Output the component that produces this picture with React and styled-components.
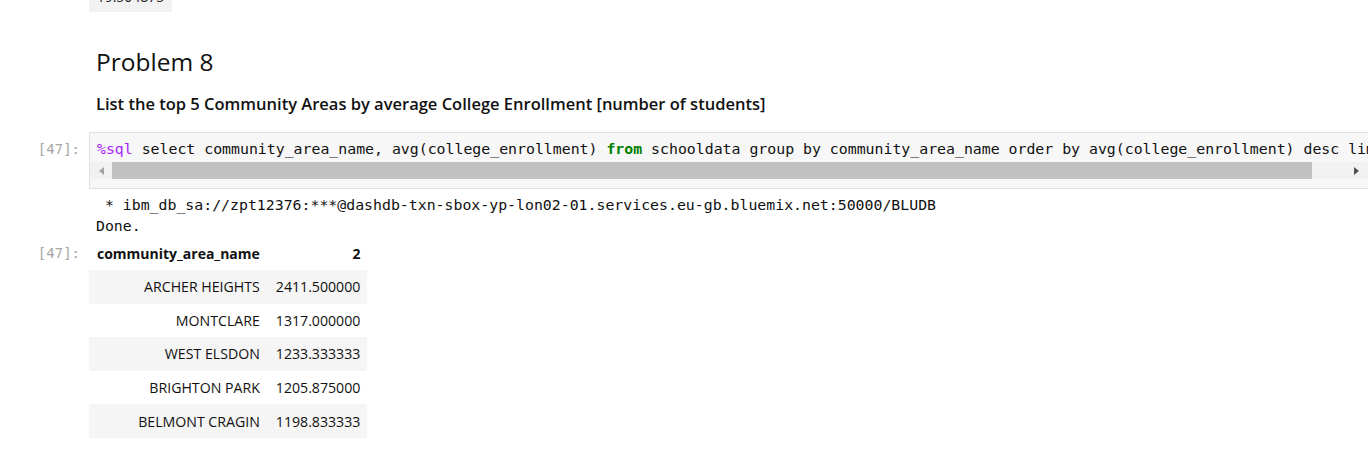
import React from "react";
import styled, { createGlobalStyle } from "styled-components";

const GlobalStyle = createGlobalStyle`
  html, body {
    margin: 0;
    padding: 0;
    background: #ffffff;
    overflow: hidden;
  }
  body {
    font-family: "Open Sans", "Noto Sans", sans-serif;
    color: #000;
  }
`;

const Notebook = styled.div`
  width: 1368px;
  height: 465px;
  overflow: hidden;
`;

const StubCell = styled.div`
  margin-left: 89px;
  width: 83px;
  height: 12px;
  background: #f2f2f2;
  overflow: hidden;
  font-size: 14px;
  line-height: 20px;
  color: #222;
  text-align: center;
  span {
    display: block;
    margin-top: -13px;
  }
`;

const Markdown = styled.div`
  padding-left: 96px;
  padding-top: 33px;
`;

const Heading = styled.h2`
  margin: 0;
  font-size: 24.5px;
  font-weight: 400;
  line-height: 34px;
  color: #111;
`;

const Lead = styled.p`
  margin: 13px 0 0;
  font-size: 16.5px;
  font-weight: 600;
  line-height: 23px;
  color: #111;
`;

const Row = styled.div`
  display: flex;
  align-items: flex-start;
  margin-top: ${(p) => p.$top || 0}px;
`;

const Prompt = styled.div`
  flex: 0 0 80px;
  width: 80px;
  padding-right: 9px;
  padding-top: ${(p) => p.$pad || 0}px;
  text-align: right;
  font-family: "DejaVu Sans Mono", "Liberation Mono", monospace;
  font-size: 14px;
  line-height: 20px;
  color: #a6a6a6;
`;

const InputArea = styled.div`
  flex: 1;
  margin-right: -4px;
  height: 55px;
  border: 1px solid #e0e0e0;
  background: #f7f7f7;
  overflow: hidden;
`;

const CodeLine = styled.pre`
  margin: 0;
  padding: 7px 0 0 7px;
  height: 27px;
  box-sizing: border-box;
  font-family: "DejaVu Sans Mono", "Liberation Mono", monospace;
  font-size: 14.85px;
  line-height: 19px;
  white-space: pre;
  color: #111;
`;

const Magic = styled.span`
  color: #aa22ff;
`;

const Keyword = styled.span`
  color: #008000;
  font-weight: bold;
`;

const ScrollBar = styled.div`
  display: flex;
  align-items: center;
  height: 17px;
  margin-top: 2px;
  background: #f1f1f1;
`;

const Arrow = styled.div`
  flex: 0 0 22px;
  display: flex;
  justify-content: center;
  align-items: center;
  svg {
    display: block;
  }
`;

const Thumb = styled.div`
  flex: 0 0 1200px;
  height: 17px;
  background: #c1c1c1;
`;

const Track = styled.div`
  flex: 1;
  display: flex;
  justify-content: flex-end;
  padding-right: 4px;
`;

const OutputText = styled.pre`
  margin: 0;
  padding-left: 7px;
  font-family: "DejaVu Sans Mono", "Liberation Mono", monospace;
  font-size: 14.85px;
  line-height: 21px;
  color: #111;
`;

const Table = styled.table`
  border-collapse: collapse;
  font-size: 14.15px;
  color: #111;
`;

const Th = styled.th`
  height: 34px;
  padding: 0 ${(p) => (p.$last ? 7 : 8)}px 0 8px;
  text-align: right;
  font-size: 14px;
  font-weight: 700;
  vertical-align: middle;
`;

const Tr = styled.tr`
  background: ${(p) => (p.$odd ? "#f5f5f5" : "#ffffff")};
`;

const Td = styled.td`
  height: 33.6px;
  padding: 0 ${(p) => (p.$last ? 7 : 8)}px 0 8px;
  text-align: right;
  vertical-align: middle;
  white-space: nowrap;
`;

const rows = [
  ["ARCHER HEIGHTS", "2411.500000"],
  ["MONTCLARE", "1317.000000"],
  ["WEST ELSDON", "1233.333333"],
  ["BRIGHTON PARK", "1205.875000"],
  ["BELMONT CRAGIN", "1198.833333"],
];

export default function App() {
  return (
    <Notebook>
      <GlobalStyle />
      <StubCell>
        <span>19.504875</span>
      </StubCell>

      <Markdown>
        <Heading>Problem 8</Heading>
        <Lead>List the top 5 Community Areas by average College Enrollment [number of students]</Lead>
      </Markdown>

      <Row $top={17}>
        <Prompt $pad={7}>[47]:</Prompt>
        <InputArea>
          <CodeLine>
            <Magic>%sql</Magic> select community_area_name, avg(college_enrollment) <Keyword>from</Keyword> schooldata group by community_area_name order by avg(college_enrollment) desc limit 5
          </CodeLine>
          <ScrollBar>
            <Arrow>
              <svg width="5" height="8" viewBox="0 0 5 8">
                <path d="M5 0 L0 4 L5 8 Z" fill="#a3a3a3" />
              </svg>
            </Arrow>
            <Thumb />
            <Track>
              <Arrow>
                <svg width="5" height="8" viewBox="0 0 5 8">
                  <path d="M0 0 L5 4 L0 8 Z" fill="#505050" />
                </svg>
              </Arrow>
            </Track>
          </ScrollBar>
        </InputArea>
      </Row>

      <Row $top={6}>
        <Prompt />
        <OutputText>{" * ibm_db_sa://zpt12376:***@dashdb-txn-sbox-yp-lon02-01.services.eu-gb.bluemix.net:50000/BLUDB\nDone."}</OutputText>
      </Row>

      <Row $top={-1}>
        <Prompt $pad={7}>[47]:</Prompt>
        <Table>
          <thead>
            <tr>
              <Th>community_area_name</Th>
              <Th $last>2</Th>
            </tr>
          </thead>
          <tbody>
            {rows.map((r, i) => (
              <Tr key={r[0]} $odd={i % 2 === 0}>
                <Td>{r[0]}</Td>
                <Td $last>{r[1]}</Td>
              </Tr>
            ))}
          </tbody>
        </Table>
      </Row>
    </Notebook>
  );
}
